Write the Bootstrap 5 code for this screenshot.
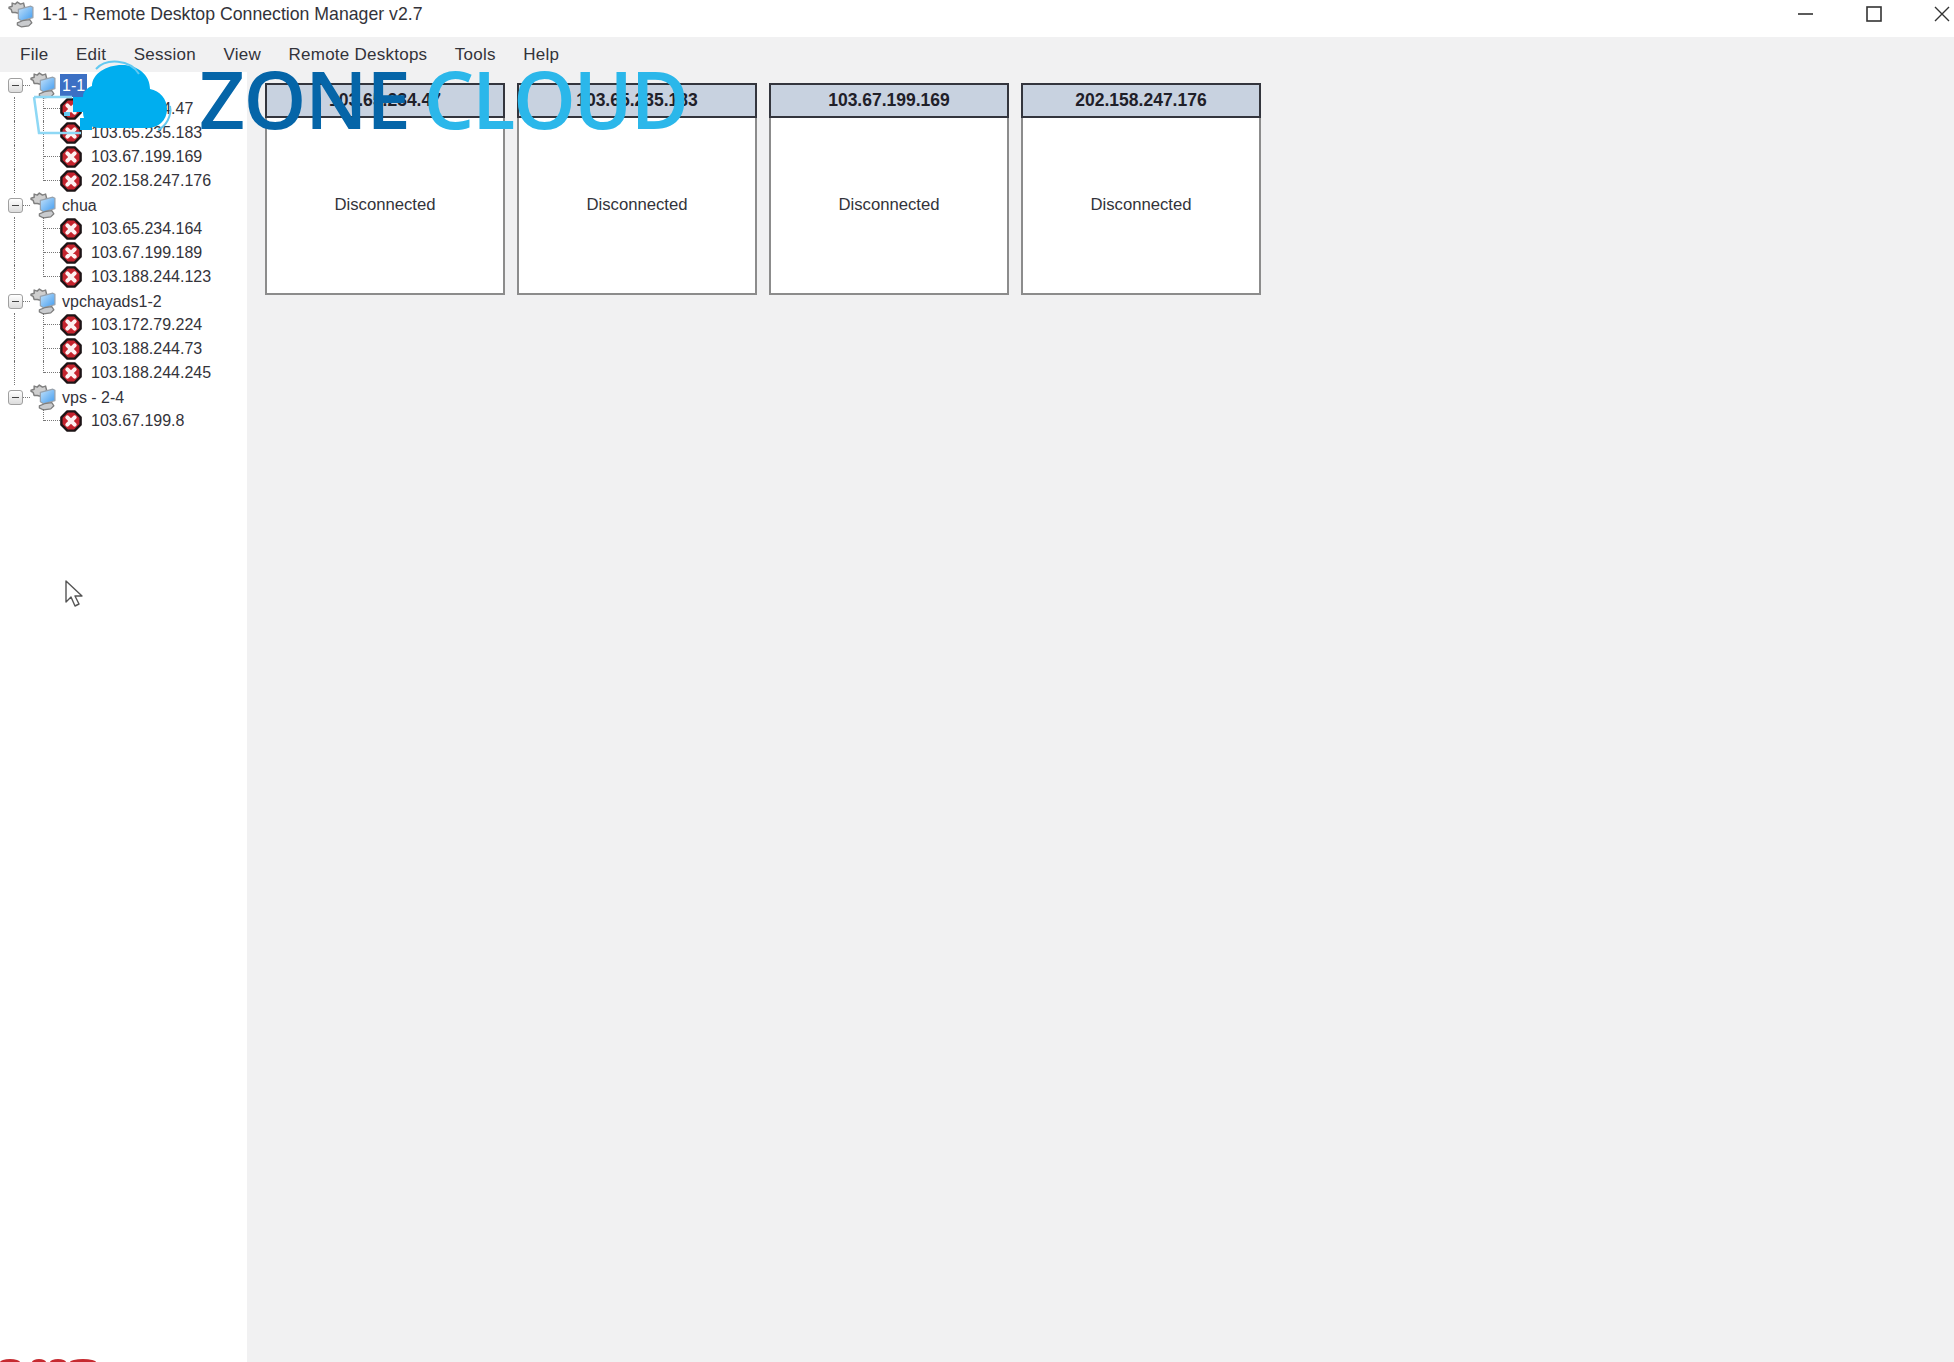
<!DOCTYPE html>
<html lang="en">
<head>
  <meta charset="UTF-8" />
  <meta name="viewport" content="width=device-width, initial-scale=1.0" />
  <title>1-1 - Remote Desktop Connection Manager v2.7</title>
  <link href="https://cdn.jsdelivr.net/npm/bootstrap@5.3.3/dist/css/bootstrap.min.css" rel="stylesheet" />
  <style>
    html, body { height: 100%; }
    body { font-family: "Liberation Sans", Arial, sans-serif; color: #33333a; background: #f1f1f2; overflow: hidden; }

    .rd-title { height: 37px; background: #fff; font-size: 17.7px; padding: 0 4px 9px 8px; }
    .rd-title-text { margin-left: 7px; color: #33333a; }
    .rd-winbtns { gap: 52px; }
    .rd-menu { height: 35px; font-size: 17px; letter-spacing: .25px; padding-left: 20px; gap: 27.5px; }

    .rd-main { height: calc(100% - 72px); }
    .rd-tree { width: 247px; background: #fff; font-size: 16px; padding-top: 1px; }
    .rd-row { height: 24px; white-space: nowrap; }
    .rd-rail { width: 15px; height: 100%; flex: none; }
    .rd-rail-on { border-right: 1px dotted #777; }
    .rd-expander { width: 15px; height: 15px; margin-left: 8px; flex: none; border: 1px solid #a0a0a0; border-radius: 3px;
      background: linear-gradient(#fff, #dcdcdc); }
    .rd-expander::after { content: ""; display: block; width: 7px; height: 1px; margin: 6px 0 0 3px; background: #444; }
    .rd-elbow { width: 17px; height: 100%; flex: none; margin-left: 28px; border-left: 1px dotted #777; }
    .rd-elbow::after { content: ""; display: block; height: 50%; border-bottom: 1px dotted #777; }
    .rd-elbow-last { height: 50%; align-self: flex-start; }
    .rd-elbow-last::after { height: 100%; }
    .rd-dash { width: 7px; flex: none; border-bottom: 1px dotted #777; }
    .rd-group-label { margin-left: 3px; padding: 0 2px; line-height: 23px; }
    .rd-selected { background: #3c70c4; color: #fff; }
    .rd-host-label { margin-left: 9px; }

    .rd-content { padding: 11px 0 0 18px; gap: 12px; }
    .rd-thumb { width: 240px; height: 212px; background: #fff; border: 2px solid #8c8c8c; border-top: 0; }
    .rd-thumb-head { height: 35px; margin: 0 -2px; background: #c8d2e0; border: 2px solid #33353d; text-align: center;
      font-weight: 700; font-size: 17.5px; line-height: 31px; color: #1f2029; }
    .rd-thumb-body { height: 175px; font-size: 16.7px; padding-bottom: 1px; }

    .rd-logo { position: absolute; left: 30px; top: 56px; }
    .rd-logo-text { position: absolute; left: 199px; top: 53px; font-family: "Open Sans", sans-serif; font-size: 80px; font-weight: 600; line-height: 90px;
      white-space: nowrap; letter-spacing: -1.5px; color: #0565a8; }
    .rd-logo-text span { color: #2bb7ea; margin-left: -5px; letter-spacing: -2.4px; }
    .rd-pointer { position: absolute; left: 64px; top: 579px; }
    .rd-clipped { position: absolute; left: 0; bottom: 0; gap: 4px; }
    .rd-clipped i { display: block; height: 3px; background: #c62a30; border-radius: 50% 50% 0 0 / 100% 100% 0 0; }
  </style>
</head>
<body>
  <svg width="0" height="0" class="position-absolute">
    <defs>
      <linearGradient id="screen-fill" x1="0" y1="0" x2="1" y2="1">
        <stop offset="0" stop-color="#c4e2fa"/><stop offset="1" stop-color="#3f9bf0"/>
      </linearGradient>
    </defs>
    <symbol id="ico-group" viewBox="0 0 26 26">
      <path d="M1 6l3-1 0-3 3 1 2-2 3 2 3-1 1 4-2 3-3 3-4-1-3 0-1-3-2-1z" fill="#cfcfcf" stroke="#7f7f7f" stroke-width="1.400" stroke-linejoin="round"/>
      <path d="M10 8l12-3 2 1v10l-11 3-3-2z" fill="url(#screen-fill)" stroke="#98a2ad" stroke-width="1.200" stroke-linejoin="round"/>
      <path d="M9 21l5-2 7-1 2 3-3 3-7 1-4-2z" fill="#c9cbce" stroke="#7e7e7e" stroke-width="1.200" stroke-linejoin="round"/>
    </symbol>
    <symbol id="ico-error" viewBox="0 0 24 24">
      <path d="M8 1.500h8l6.500 6.500v8l-6.500 6.500H8l-6.500-6.500V8z" fill="#c5242e" stroke="#1d1416" stroke-width="2.600" stroke-linejoin="round"/>
      <path d="M8 8l8 8M16 8l-8 8" stroke="#fdf1f1" stroke-width="4.400" stroke-linecap="round"/>
    </symbol>
  </svg>

  <div class="rd-title d-flex align-items-center">
    <svg width="27" height="27"><use href="#ico-group"/></svg>
    <span class="rd-title-text flex-grow-1">1-1 - Remote Desktop Connection Manager v2.7</span>
    <div class="rd-winbtns d-flex align-items-center">
      <svg width="16" height="16"><path d="M0 8h15" stroke="#333" stroke-width="1.600"/></svg>
      <svg width="16" height="16"><rect x="1" y="1" width="14" height="14" fill="none" stroke="#333" stroke-width="1.600"/></svg>
      <svg width="16" height="16"><path d="M1 1l14 14M15 1L1 15" stroke="#333" stroke-width="1.400"/></svg>
    </div>
  </div>

  <div class="rd-menu d-flex align-items-center">
    <span>File</span><span>Edit</span><span>Session</span><span>View</span><span>Remote Desktops</span><span>Tools</span><span>Help</span>
  </div>

  <div class="rd-main d-flex">
    <div class="rd-tree flex-shrink-0" id="tree"></div>
    <div class="rd-content d-flex align-items-start flex-grow-1" id="thumbs"></div>
  </div>

  <svg class="rd-logo" width="150" height="84" viewBox="0 0 150 84">
    <path d="M62 30c0-12 14-21 30-21 16 0 28 10 28 24 10 2 17 10 17 20 0 12-9 19-20 19H70c-10 0-17-6-17-16V40c0-4 4-8 9-10z" fill="#00aeef"/>
    <path d="M66 13c10-11 34-10 43 5M140 50c2 10-4 20-12 24" fill="none" stroke="#63c9f1" stroke-width="2"/>
    <path d="M4 41h38M4 41l5 36h42" fill="none" stroke="#8ed8f5" stroke-width="2.500"/>
    <rect x="43" y="41" width="17" height="15" fill="#00aeef"/>
    <rect x="50" y="62" width="12" height="12" fill="#00aeef"/>
    <rect x="34" y="56" width="6" height="4" fill="#63c9f1"/>
  </svg>
  <div class="rd-logo-text">ZONE <span>CLOUD</span></div>

  <svg class="rd-pointer" width="22" height="30" viewBox="0 0 22 30">
    <path d="M2 2v21l5-5 4 9 4-2-4-8h7z" fill="#fff" stroke="#555" stroke-width="1.400" stroke-linejoin="round"/>
  </svg>
  <div class="rd-clipped d-flex">
    <i style="width: 20px"></i><i class="ms-2" style="width: 14px"></i><i style="width: 16px"></i><i style="width: 26px"></i>
  </div>

  <script>
    const groups = [
      { name: "1-1", selected: true, hosts: ["103.65.234.47", "103.65.235.183", "103.67.199.169", "202.158.247.176"] },
      { name: "chua", hosts: ["103.65.234.164", "103.67.199.189", "103.188.244.123"] },
      { name: "vpchayads1-2", hosts: ["103.172.79.224", "103.188.244.73", "103.188.244.245"] },
      { name: "vps - 2-4", hosts: ["103.67.199.8"] }
    ];

    let treeHtml = "";
    groups.forEach((g, gi) => {
      const hasNext = gi < groups.length - 1;
      treeHtml += `<div class="rd-row d-flex align-items-center">
        <span class="rd-expander"></span><span class="rd-dash"></span>
        <svg width="27" height="27" class="flex-shrink-0"><use href="#ico-group"/></svg>
        <span class="rd-group-label ${g.selected ? "rd-selected" : ""}">${g.name}</span>
      </div>`;
      g.hosts.forEach((h, hi) => {
        const last = hi === g.hosts.length - 1;
        treeHtml += `<div class="rd-row d-flex align-items-center">
          <span class="rd-rail ${hasNext ? "rd-rail-on" : ""}"></span>
          <span class="rd-elbow ${last ? "rd-elbow-last" : ""}"></span>
          <svg width="22" height="22" class="flex-shrink-0"><use href="#ico-error"/></svg>
          <span class="rd-host-label">${h}</span>
        </div>`;
      });
    });
    document.getElementById("tree").innerHTML = treeHtml;

    document.getElementById("thumbs").innerHTML = groups[0].hosts.map(h => `
      <div class="rd-thumb">
        <div class="rd-thumb-head">${h}</div>
        <div class="rd-thumb-body d-flex align-items-center justify-content-center">Disconnected</div>
      </div>`).join("");
  </script>
  <script src="https://cdn.jsdelivr.net/npm/bootstrap@5.3.3/dist/js/bootstrap.bundle.min.js"></script>
</body>
</html>
